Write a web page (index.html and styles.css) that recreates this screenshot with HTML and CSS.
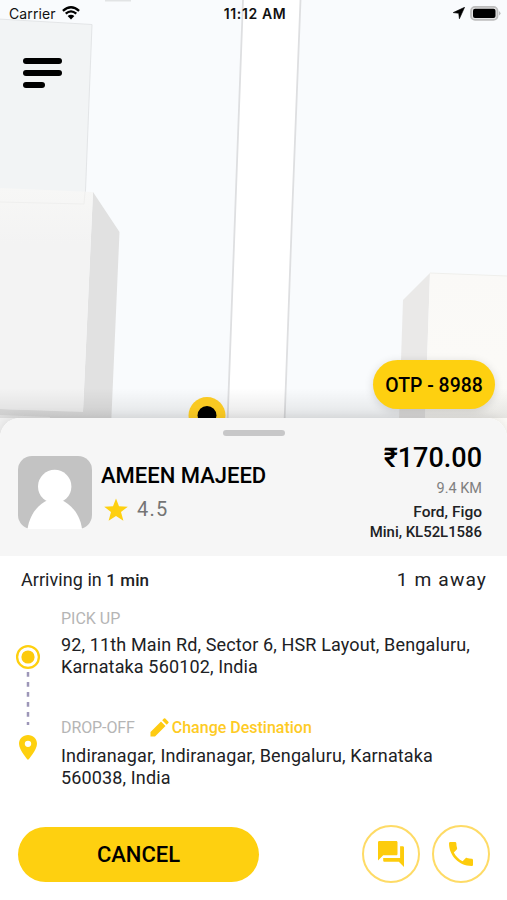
FILE: index.html
```html
<!DOCTYPE html>
<html lang="en">
<head>
<meta charset="utf-8">
<title>Ride</title>
<link rel="stylesheet" href="styles.css">
</head>
<body>
<div class="screen">
  <section class="map">
    <svg class="map-canvas" width="507" height="450" viewBox="0 0 507 450">
      <defs>
        <linearGradient id="wall" x1="0" y1="0" x2="0" y2="1"><stop offset="0" stop-color="#f7f7f6"/><stop offset=".25" stop-color="#f3f3f3"/></linearGradient>
        <linearGradient id="cream" x1="0" y1="0" x2="0" y2="1"><stop offset="0" stop-color="#faf9f7"/><stop offset="1" stop-color="#fcfbf7"/></linearGradient>
        <linearGradient id="shade" x1="0" y1="0" x2="0" y2="1"><stop offset="0" stop-color="#000" stop-opacity="0"/><stop offset="1" stop-color="#000" stop-opacity=".09"/></linearGradient>
      </defs>
      <rect width="507" height="450" fill="#f9fbfd"/>
      <path d="M105 0h26v1.500h-26z" fill="#e2e4e5"/>
      <path d="M-2 19L92 24.500L85 203H-2z" fill="#f2f4f5" stroke="#e3e5e7"/>
      <path d="M243 0H300.500L284.500 450H226z" fill="#fff"/>
      <path d="M243 0L235 217L226.500 450M300.500 0L292 217L283.500 450" fill="none" stroke="#dedfe1" stroke-width="1.800"/>
      <path d="M93 192L119.500 232L110 450H0V409L83 411z" fill="#e1e1e1"/>
      <path d="M0 188L93 192L83 412L0 409z" fill="url(#wall)"/>
      <path d="M0 202L84 204L85 192" fill="none" stroke="#efefee"/>
      <path d="M0 415L50 417L45 450H0z" fill="#f0f0f0"/>
      <path d="M430 273L403 300L398 450H424z" fill="#eae9e8"/>
      <path d="M430 273L507 276V450H424z" fill="url(#cream)"/>
      <path d="M430 273L507 276" stroke="#efefec" fill="none"/>
      <rect y="388" width="507" height="30" fill="url(#shade)"/>
      <circle cx="207" cy="415.500" r="18.500" fill="#f9c922"/>
      <circle cx="207" cy="415.500" r="9.500" fill="#000"/>
    </svg>
    <header class="status">
      <div class="status-left"><span class="carrier">Carrier</span>
        <svg width="18" height="14" viewBox="0 0 18 14"><path d="M.9 4.800Q9-2.200 17.100 4.800M3.700 7.600Q9 3.200 14.300 7.600" fill="none" stroke="#000" stroke-width="2.300"/><path d="M9 13.500L5.600 10.100Q9 7.400 12.400 10.100z"/></svg>
      </div>
      <span class="clock">11:12 AM</span>
      <div class="status-right">
        <svg width="12" height="12" viewBox="0 0 12 12"><path d="M11.600.3L.2 5.600L5.700 6.300L6.400 11.800z" stroke="#000" stroke-width=".6" stroke-linejoin="round"/></svg>
        <svg width="31" height="15" viewBox="0 0 31 15"><rect x="1" y=".9" width="26.500" height="13" rx="4" fill="#e4e4e4" stroke="#bdbdbd" stroke-width="1.800"/><rect x="3" y="2.700" width="22.500" height="9.400" rx="2"/><path d="M29 5q3 2.300 0 4.600z" fill="#bdbdbd"/></svg>
      </div>
    </header>
    <div class="menu"><i></i><i></i><i></i></div>
    <div class="otp">OTP - 8988</div>
  </section>

  <main class="sheet">
    <section class="driver">
      <div class="handle"></div>
      <div class="driver-row">
        <svg class="avatar" width="74" height="73" viewBox="0 0 74 73"><rect width="74" height="73" rx="14" fill="#c3c3c3"/><circle cx="36.700" cy="30.500" r="16.700" fill="#fff"/><path d="M9.500 73C12 57 21 48 30 44H43.500C52 48 62 57 64 73z" fill="#fff"/></svg>
        <div class="who">
          <div class="name">AMEEN MAJEED</div>
          <div class="rating"><svg width="24" height="24" viewBox="0 0 24 24"><path fill="#fed00f" d="M12 .4L15 8.300L23.800 8.700L17 14L19.400 22.800L12 18L4.600 22.800L7 14L.2 8.700L9 8.300z"/></svg><span>4.5</span></div>
        </div>
        <div class="fare">
          <div class="price">₹170.00</div>
          <div class="km">9.4 KM</div>
          <div class="car car-model">Ford, Figo</div>
          <div class="car">Mini, KL52L1586</div>
        </div>
      </div>
    </section>

    <section class="eta"><div class="arriving">Arriving in <b>1 min</b></div><div class="away">1 m away</div></section>

    <section class="route">
      <div class="rail">
        <svg width="26" height="26" viewBox="0 0 26 26"><circle cx="13" cy="13" r="10.900" fill="none" stroke="#fed00f" stroke-width="2.300"/><circle cx="13" cy="13" r="6.600" fill="#fdca0b"/></svg>
        <svg width="4" height="54" viewBox="0 0 4 54"><path d="M2 1V54" stroke="#9d96b8" stroke-width="2.500" stroke-dasharray="4.800 5.200"/></svg>
        <svg class="pin" width="18" height="25" viewBox="5 2 14 20" preserveAspectRatio="none"><path fill="#fed00f" d="M12 2C8.130 2 5 5.130 5 9c0 5.250 7 13 7 13s7-7.750 7-13c0-3.870-3.130-7-7-7zm0 9.500a2.500 2.500 0 1 1 0-5 2.500 2.500 0 0 1 0 5z"/></svg>
      </div>
      <div class="stops">
        <div class="label pick">PICK UP</div>
        <div class="addr first">92, 11th Main Rd, Sector 6, HSR Layout, Bengaluru,<br>Karnataka 560102, India</div>
        <div class="drop-head"><span class="label drop">DROP-OFF</span>
          <svg width="19" height="19" viewBox="0 0 19 19"><path fill="#fecb12" d="M.5 18.500V14L11 3.500L15.500 8L5 18.500zM12.200 2.300L13.900.6Q14.600 0 15.300.6L18.400 3.700Q19 4.400 18.400 5.100L16.700 6.800z"/></svg>
          <span class="change">Change Destination</span></div>
        <div class="addr second">Indiranagar, Indiranagar, Bengaluru, Karnataka<br>560038, India</div>
      </div>
    </section>

    <footer class="actions">
      <div class="cancel"><span>CANCEL</span></div>
      <div class="round"><svg width="26" height="26" viewBox="2 2 20 20"><path fill="#fdcc0c" d="M21 6h-2v9H6v2c0 .55.45 1 1 1h11l4 4V7c0-.55-.45-1-1-1zm-4 6V3c0-.55-.45-1-1-1H3c-.55 0-1 .45-1 1v14l4-4h10c.55 0 1-.45 1-1z"/></svg></div>
      <div class="round"><svg width="24" height="24" viewBox="3 3 18 18"><path fill="#fdcc0c" d="M6.620 10.790c1.440 2.830 3.760 5.140 6.590 6.590l2.200-2.200c.27-.27.670-.36 1.020-.24 1.120.37 2.330.57 3.570.57.55 0 1 .45 1 1V20c0 .55-.45 1-1 1-9.390 0-17-7.610-17-17 0-.55.45-1 1-1h3.500c.55 0 1 .45 1 1 0 1.250.2 2.450.57 3.570.11.35.030.740-.25 1.020l-2.200 2.200z"/></svg></div>
    </footer>
  </main>
</div>
</body>
</html>
```
FILE: styles.css
```css
* { box-sizing: border-box; }
body { margin: 0; font-family: Roboto, "Liberation Sans", sans-serif; color: #202124; background: #fff; }
svg { display: block; flex: none; }
.screen { width: 507px; height: 900px; display: flex; flex-direction: column; overflow: hidden; }
.map { position: relative; height: 418px; flex: none; }
.map-canvas { position: absolute; left: 0; top: 0; }
.status { position: relative; height: 26px; padding: 0 6px 0 9px; display: grid; grid-template-columns: 1fr auto 1fr; align-items: center; font-family: Inter, sans-serif; color: #111; }
.status-left { display: flex; align-items: center; gap: 6px; }
.carrier { font-size: 14px; letter-spacing: .1px; }
.clock { font-size: 14px; font-weight: 600; letter-spacing: .6px; }
.status-right { display: flex; align-items: center; justify-content: flex-end; gap: 5px; }
.menu { position: relative; display: flex; flex-direction: column; gap: 6px; margin: 32px 0 0 23px; }
.menu i { width: 39px; height: 6px; border-radius: 3px; background: #000; }
.menu i:last-child { width: 22px; }
.otp { position: absolute; right: 12px; bottom: 9px; width: 122px; height: 49px; border-radius: 25px; background: #fed010; color: #000; font-size: 19.400px; font-weight: 500; line-height: 51px; text-align: center; box-shadow: 0 2px 10px rgba(0,0,0,.14); }
.sheet { position: relative; flex: 1; border-radius: 20px 20px 0 0; background: #fff; box-shadow: 0 0 12px rgba(0,0,0,.1); display: flex; flex-direction: column; }
.driver { height: 138px; flex: none; border-radius: 20px 20px 0 0; background: #f6f6f6; }
.handle { width: 62px; height: 6px; margin: 0 0 0 223px; border-radius: 3px; background: #c7c7c8; transform: translateY(12px); }
.driver-row { display: flex; padding: 0 25px 0 18px; }
.avatar { margin-top: 32px; }
.who { margin: 38px 0 0 9px; }
.name { font-size: 22px; font-weight: 500; line-height: 28px; color: #000; }
.rating { display: flex; align-items: center; gap: 9px; margin-top: 7px; margin-left: 3px; font-size: 20px; line-height: 25px; letter-spacing: 1.2px; color: #747474; }
.fare { margin-left: auto; text-align: right; padding-top: 16px; }
.price { font-size: 27px; font-weight: 500; line-height: 36px; color: #000; }
.km { font-size: 14.500px; line-height: 20px; margin-top: 3px; color: #808080; }
.car { font-size: 14.900px; font-weight: 500; line-height: 20px; }
.car-model { margin-top: 3px; font-size: 15.500px; }
.eta { display: flex; justify-content: space-between; padding: 12px 20px 0 21px; line-height: 24px; height: 48px; }
.arriving { font-size: 18px; letter-spacing: .05px; }
.arriving b { font-size: 17px; font-weight: 500; }
.away { font-size: 19.200px; letter-spacing: 1.100px; }
.route { display: flex; }
.rail { width: 61px; padding: 40px 0 0 15px; display: flex; flex-direction: column; align-items: flex-start; }
.rail svg:nth-child(2) { margin: 1px 0 0 11px; }
.pin { margin: 10px 0 0 4px; }
.label { font-size: 16px; line-height: 20px; color: #b5b5b5; }
.pick { margin-top: 5px; }
.addr { font-size: 18px; line-height: 22px; letter-spacing: .14px; white-space: nowrap; }
.first { margin-top: 5px; }
.drop-head { display: flex; align-items: center; margin-top: 40px; }
.drop { letter-spacing: -.1px; }
.drop-head svg { margin: -1px 3px 1px 15px; }
.change { font-size: 16px; font-weight: 500; line-height: 20px; color: #fecb24; }
.second { margin-top: 7px; }
.actions { display: flex; align-items: center; padding: 0 17px 0 18px; margin-top: 36px; gap: 12px; }
.cancel { width: 241px; height: 55px; border-radius: 28px; background: #fed010; color: #000; font-size: 22px; font-weight: 500; line-height: 56px; text-align: center; margin-right: auto; }
.round { width: 58px; height: 58px; border: 2px solid #fedb66; border-radius: 50%; display: flex; align-items: center; justify-content: center; }
```
